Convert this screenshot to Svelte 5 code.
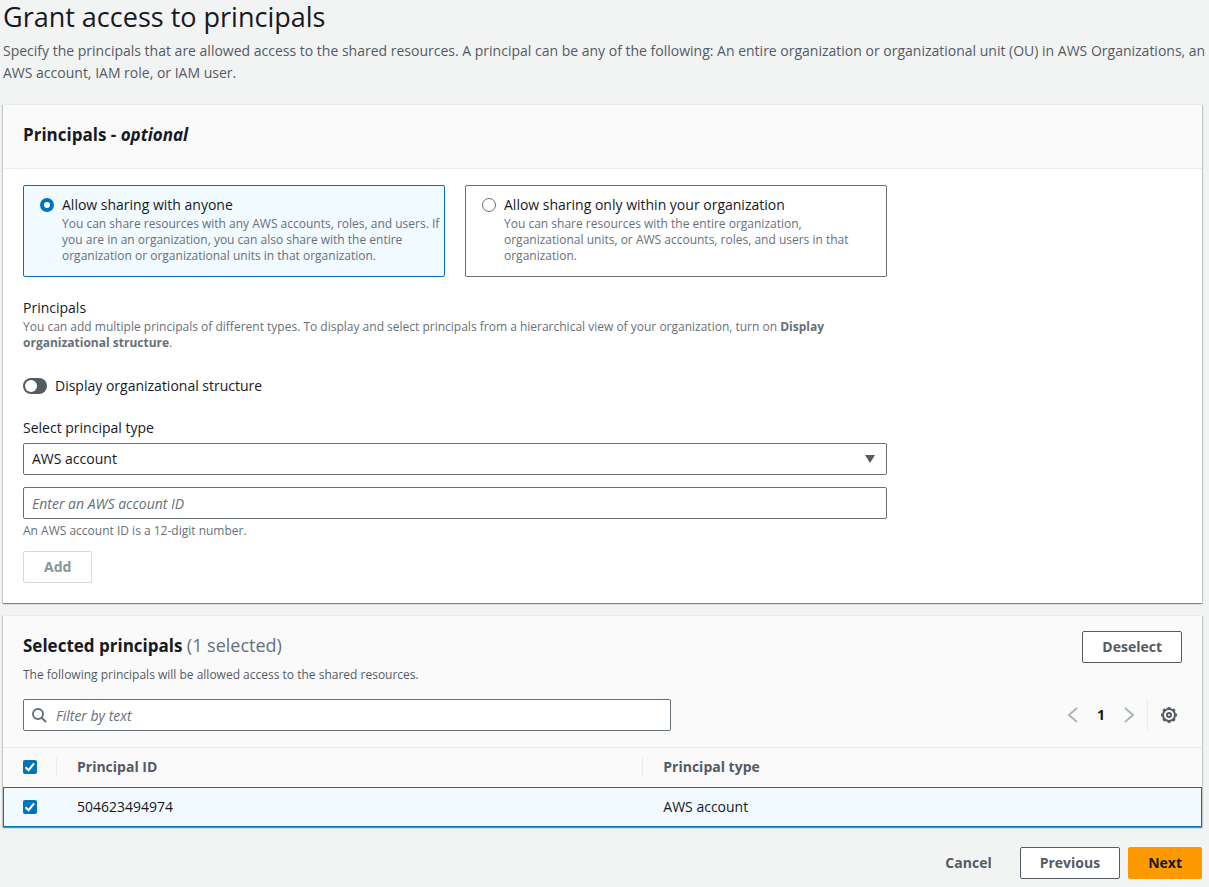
<script>
  let sharing = $state('anyone');
  let showStructure = $state(false);
  let principalType = $state('AWS account');
  let accountId = $state('');
  let filter = $state('');
  let principals = $state([{ id: '504623494974', type: 'AWS account', selected: true }]);

  const options = [
    {
      value: 'anyone',
      title: 'Allow sharing with anyone',
      text: 'You can share resources with any AWS accounts, roles, and users. If you are in an organization, you can also share with the entire organization or organizational units in that organization.'
    },
    {
      value: 'organization',
      title: 'Allow sharing only within your organization',
      text: 'You can share resources with the entire organization, organizational units, or AWS accounts, roles, and users in that organization.'
    }
  ];

  let selectedCount = $derived(principals.filter((p) => p.selected).length);
  let visible = $derived(principals.filter((p) => (p.id + ' ' + p.type).includes(filter)));

  function toggleAll(event) {
    const checked = event.currentTarget.checked;
    principals.forEach((p) => (p.selected = checked));
  }

  function deselect() {
    principals = principals.filter((p) => !p.selected);
  }

  function add() {
    principals.push({ id: accountId, type: principalType, selected: false });
    accountId = '';
  }
</script>

<main>
  <header class="page-header">
    <h1>Grant access to principals</h1>
    <p>
      Specify the principals that are allowed access to the shared resources. A principal can be any
      of the following: An entire organization or organizational unit (OU) in AWS Organizations, an
      AWS account, IAM role, or IAM user.
    </p>
  </header>

  <div class="content">
    <section class="panel">
      <div class="panel-header">
        <h2>Principals - <em>optional</em></h2>
      </div>
      <div class="panel-body">
        <div class="tiles">
          {#each options as option}
            <label class="tile" class:active={sharing === option.value}>
              <input type="radio" name="sharing" value={option.value} bind:group={sharing} />
              <span class="tile-text">
                <span class="tile-title">{option.title}</span>
                <span class="hint">{option.text}</span>
              </span>
            </label>
          {/each}
        </div>

        <div class="intro">
          <div>Principals</div>
          <p class="hint">
            You can add multiple principals of different types. To display and select principals from
            a hierarchical view of your organization, turn on <b>Display organizational structure</b>.
          </p>
        </div>

        <label class="toggle">
          <input type="checkbox" role="switch" bind:checked={showStructure} />
          Display organizational structure
        </label>

        <div class="fields">
          <label for="principal-type">Select principal type</label>
          <div class="select">
            <select id="principal-type" bind:value={principalType}>
              <option>AWS account</option>
              <option>Organization</option>
              <option>Organizational unit (OU)</option>
              <option>IAM role</option>
              <option>IAM user</option>
            </select>
            <svg class="caret" viewBox="0 0 10 8" aria-hidden="true"><path d="M0 0h10L5 8z" /></svg>
          </div>
          <input
            type="text"
            aria-label="AWS account ID"
            aria-describedby="account-hint"
            placeholder="Enter an AWS account ID"
            bind:value={accountId}
          />
          <p class="hint" id="account-hint">An AWS account ID is a 12-digit number.</p>
          <button class="add" type="button" disabled={accountId.length !== 12} onclick={add}>Add</button>
        </div>
      </div>
    </section>

    <section class="panel">
      <div class="table-header">
        <div class="title-row">
          <div>
            <h2>Selected principals <span class="count">({selectedCount} selected)</span></h2>
            <p class="hint dark">The following principals will be allowed access to the shared resources.</p>
          </div>
          <button type="button" onclick={deselect}>Deselect</button>
        </div>
        <div class="tools">
          <div class="search">
            <svg viewBox="0 0 16 16" aria-hidden="true">
              <circle cx="7" cy="7" r="5" />
              <path d="M10.5 10.5 15 15" />
            </svg>
            <input type="text" aria-label="Filter by text" placeholder="Filter by text" bind:value={filter} />
          </div>
          <nav class="pages" aria-label="Pages">
            <button class="icon arrow" type="button" aria-label="Previous page">
              <svg viewBox="0 0 16 16"><path d="M12 1 4 8l8 7" /></svg>
            </button>
            <button class="icon page" type="button" aria-current="page">1</button>
            <button class="icon arrow" type="button" aria-label="Next page">
              <svg viewBox="0 0 16 16"><path d="m4 1 8 7-8 7" /></svg>
            </button>
          </nav>
          <div class="settings">
            <button class="icon gear" type="button" aria-label="Preferences">
              <svg viewBox="0 0 16 16">
                <circle cx="8" cy="8" r="6" />
                <circle class="teeth" cx="8" cy="8" r="7" pathLength="32" />
                <circle cx="8" cy="8" r="2" />
              </svg>
            </button>
          </div>
        </div>
      </div>
      <table>
        <thead>
          <tr>
            <th class="check">
              <input
                type="checkbox"
                aria-label="Select all principals"
                checked={selectedCount > 0 && selectedCount === principals.length}
                onchange={toggleAll}
              />
            </th>
            <th class="id"><span>Principal ID</span></th>
            <th><span>Principal type</span></th>
          </tr>
        </thead>
        <tbody>
          {#each visible as principal}
            <tr class:selected={principal.selected}>
              <td class="check">
                <input type="checkbox" aria-label="Select {principal.id}" bind:checked={principal.selected} />
              </td>
              <td>{principal.id}</td>
              <td>{principal.type}</td>
            </tr>
          {/each}
        </tbody>
      </table>
    </section>

    <footer>
      <button class="link" type="button">Cancel</button>
      <button type="button">Previous</button>
      <button class="primary" type="button">Next</button>
    </footer>
  </div>
</main>

<style>
  :global(body) {
    margin: 0;
    background: #f2f3f3;
  }

  main {
    padding: 0 0 8px 3px;
    color: #16191f;
    font: 14px/22px 'Open Sans', 'Noto Sans', sans-serif;
  }

  main * {
    box-sizing: border-box;
  }

  .content {
    padding-right: 7px;
  }

  h1,
  h2,
  p {
    margin: 0;
  }

  h1 {
    font-size: 27px;
    line-height: 34px;
    font-weight: 400;
  }

  h2 {
    font-size: 17px;
    line-height: 24px;
    font-weight: 700;
  }

  .page-header {
    margin-bottom: 20px;
  }

  .page-header p {
    margin-top: 6px;
    color: #545b64;
  }

  .panel {
    margin-bottom: 12px;
    background: #fff;
    border-top: 1px solid #eaeded;
    box-shadow:
      0 1px 1px 0 rgba(0, 28, 36, 0.3),
      1px 1px 1px 0 rgba(0, 28, 36, 0.15),
      -1px 1px 1px 0 rgba(0, 28, 36, 0.15);
  }

  .panel-header {
    padding: 18px 20px 21px;
    background: #fafafa;
    border-bottom: 1px solid #eaeded;
  }

  .panel-body {
    padding: 16px 20px 20px;
  }

  .tiles,
  .intro,
  .fields {
    max-width: 864px;
  }

  .tiles {
    display: grid;
    grid-template-columns: 1fr 1fr;
    gap: 20px;
  }

  .tile {
    display: flex;
    gap: 8px;
    padding: 8px 4px 12px 16px;
    border: 1px solid #687078;
    border-radius: 2px;
  }

  .tile.active {
    background: #f1faff;
    border-color: #0073bb;
  }

  .tile-text {
    display: flex;
    flex-direction: column;
  }

  .tile input {
    flex: none;
    appearance: none;
    width: 14px;
    height: 14px;
    margin: 4px 0;
    background: #fff;
    border: 1px solid #687078;
    border-radius: 50%;
  }

  .tile input:checked {
    border: 4px solid #0073bb;
  }

  .hint {
    color: #687078;
    font-size: 12px;
    line-height: 16px;
  }

  .hint.dark {
    color: #545b64;
  }

  .intro {
    margin: 20px 0 24px;
  }

  .toggle {
    display: flex;
    align-items: center;
    gap: 8px;
    margin-bottom: 20px;
  }

  .toggle input {
    appearance: none;
    width: 24px;
    height: 16px;
    margin: 0;
    padding: 2px;
    background: #545b64;
    border-radius: 8px;
  }

  .toggle input::before {
    content: '';
    display: block;
    width: 12px;
    height: 12px;
    background: #fff;
    border-radius: 50%;
  }

  .toggle input:checked {
    padding-left: 10px;
    background: #0073bb;
  }

  .fields {
    display: flex;
    flex-direction: column;
    gap: 4px;
  }

  .select {
    position: relative;
    margin-bottom: 8px;
  }

  select,
  input[type='text'] {
    appearance: none;
    display: block;
    width: 100%;
    height: 32px;
    padding: 0 8px;
    background: #fff;
    border: 1px solid #687078;
    border-radius: 2px;
    color: inherit;
    font: inherit;
  }

  ::placeholder {
    color: #687078;
    font-style: italic;
    opacity: 1;
  }

  button {
    height: 32px;
    padding: 0 19px;
    background: #fff;
    border: 1px solid #545b64;
    border-radius: 2px;
    color: #545b64;
    font: inherit;
    font-weight: 700;
  }

  button:disabled {
    border-color: #d5dbdb;
    color: #879596;
  }

  .add {
    align-self: flex-start;
    margin-top: 8px;
    padding: 0 20px;
  }

  .table-header {
    padding: 15px 20px 16px;
    background: #fafafa;
    border-bottom: 1px solid #eaeded;
  }

  .title-row,
  .tools {
    display: flex;
    align-items: flex-start;
    justify-content: space-between;
  }

  .title-row h2 {
    margin: 3px 0 9px;
  }

  .count {
    color: #687078;
    font-size: 18px;
    line-height: 20px;
    font-weight: 400;
  }

  .tools {
    align-items: center;
    margin-top: 16px;
  }

  .search {
    position: relative;
    flex: 0 1 648px;
    margin-right: auto;
  }

  .search input {
    padding-left: 32px;
  }

  svg {
    width: 16px;
    height: 16px;
    fill: none;
    stroke: #545b64;
    stroke-width: 2;
  }

  .search svg {
    position: absolute;
    top: 8px;
    left: 8px;
    stroke: #687078;
  }

  .caret {
    position: absolute;
    top: 12px;
    right: 12px;
    width: 10px;
    height: 8px;
    fill: #545b64;
    stroke: none;
    pointer-events: none;
  }

  .pages {
    display: flex;
    gap: 4px;
    padding-right: 6px;
  }

  .icon {
    display: grid;
    place-items: center;
    width: 24px;
    height: 32px;
    padding: 0;
    background: none;
    border: 0;
  }

  .gear {
    width: 26px;
  }

  .page {
    color: #16191f;
  }

  .arrow svg {
    stroke: #aab7b8;
  }

  .settings {
    padding-left: 8px;
    border-left: 1px solid #eaeded;
  }

  .teeth {
    stroke-dasharray: 2 2;
    stroke-dashoffset: 1;
  }

  table {
    width: 100%;
    border-collapse: separate;
    border-spacing: 0;
    table-layout: fixed;
  }

  th,
  td {
    height: 40px;
    padding: 0 20px;
    text-align: left;
  }

  th {
    height: 39px;
    padding: 0 0 1px;
    background: #fafafa;
    color: #545b64;
  }

  th span {
    display: block;
    padding-left: 20px;
    border-left: 1px solid #eaeded;
    line-height: 20px;
  }

  td {
    padding-left: 21px;
  }

  .check {
    width: 53px;
    padding: 0 0 1px 20px;
  }

  td.check {
    padding-bottom: 0;
  }

  .id {
    width: 48.9%;
  }

  .selected td {
    background: #f1faff;
    border: solid #0073bb;
    border-width: 1px 0;
  }

  .selected td:first-child {
    border-left-width: 1px;
    padding-left: 19px;
  }

  .selected td:last-child {
    border-right-width: 1px;
  }

  .check input {
    appearance: none;
    display: block;
    width: 14px;
    height: 14px;
    margin: 0;
    background: #fff;
    border: 1px solid #687078;
    border-radius: 2px;
  }

  .check input:checked {
    background: #0073bb
      url("data:image/svg+xml,%3Csvg xmlns='http://www.w3.org/2000/svg' viewBox='0 0 14 14'%3E%3Cpath d='M2.5 7.3 5.5 10.2 11 3.5' fill='none' stroke='%23fff' stroke-width='2'/%3E%3C/svg%3E")
      center / 14px 14px no-repeat border-box;
    border-color: transparent;
  }

  footer {
    display: flex;
    justify-content: flex-end;
    gap: 8px;
    margin-top: 20px;
  }

  .link {
    background: none;
    border-color: transparent;
  }

  .primary {
    background: #ff9900;
    border-color: #ff9900;
    color: #16191f;
  }
</style>
